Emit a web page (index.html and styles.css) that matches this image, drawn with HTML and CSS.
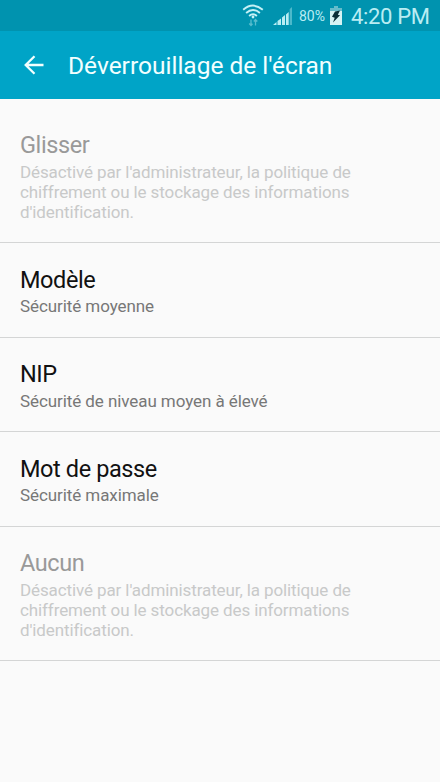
FILE: index.html
```html
<!DOCTYPE html>
<html lang="fr">
<head>
<meta charset="utf-8">
<title>Déverrouillage de l'écran</title>
<link rel="stylesheet" href="styles.css">
</head>
<body>
<div class="status">
  <svg class="wifi" width="22" height="24" viewBox="0 0 22 24" fill="none" stroke="#c5f1f6" stroke-width="1.9">
    <path d="M1.2 5.700Q11 -2.500 20.8 5.700M4.1 8.900Q11 3.200 17.900 8.900M7.100 11.900Q11 8.700 14.900 11.900"/>
    <circle cx="11" cy="13" r="1.400" fill="#c5f1f6" stroke="none"/>
    <path d="M9 21.500V15.500M7.200 19.500L9 21.500L10.500 19.800M13.500 21.500V15.500M11.800 17.500L13.500 15.500L15.300 17.500" stroke="#57bdce" stroke-width="1.300"/>
  </svg>
  <svg class="signal" width="20" height="20" viewBox="0 0 20 20" fill="#b9edf3">
    <path d="M0 19L3.500 16V19zM4.500 15L8 12.500V19H4.500zM9 11.500L12 9V19H9zM13 8.500L15.700 6V19H13z"/>
    <path d="M16.700 3L19 1V19h-2.300z" fill="#4cb9cb"/>
  </svg>
  <span class="percent">80%</span>
  <svg class="battery" width="12" height="19" viewBox="0 0 12 19">
    <path d="M4 0h4v2h4v17H0V2h4z" fill="#d6f3f4"/>
    <path d="M4 0h4v2h4v3H0V2h4z" fill="#65bccb"/>
    <path d="M5 5.500L10 4.500L7.800 8.700L10 9.200L3 16.500L4.700 11.700L2 10.800Z" fill="#092f38"/>
  </svg>
  <span class="time">4:20 PM</span>
</div>
<header class="bar">
  <svg class="back" width="20" height="20" viewBox="0 0 20 20" fill="none" stroke="#f2ffff" stroke-width="2.300">
    <path d="M19.500 10H2M10.500 1.200L1.700 10L10.500 18.800"/>
  </svg>
  <h1>Déverrouillage de l'écran</h1>
</header>
<main>
  <section class="item off">
    <h2>Glisser</h2>
    <p>Désactivé par l'administrateur, la politique de<br>chiffrement ou le stockage des informations<br>d'identification.</p>
  </section>
  <section class="item">
    <h2>Modèle</h2>
    <p>Sécurité moyenne</p>
  </section>
  <section class="item">
    <h2>NIP</h2>
    <p>Sécurité de niveau moyen à élevé</p>
  </section>
  <section class="item">
    <h2>Mot de passe</h2>
    <p>Sécurité maximale</p>
  </section>
  <section class="item off">
    <h2>Aucun</h2>
    <p>Désactivé par l'administrateur, la politique de<br>chiffrement ou le stockage des informations<br>d'identification.</p>
  </section>
</main>
</body>
</html>
```
FILE: styles.css
```css
* { box-sizing: border-box; margin: 0; }
body {
  height: 782px;
  overflow: hidden;
  background: #fafafa;
  font-family: Roboto, "Liberation Sans", sans-serif;
}
.status {
  display: flex;
  height: 31px;
  padding-left: 242px;
  background: #0093af;
  color: #b9edf3;
  white-space: nowrap;
}
.status svg { flex: none; }
.wifi { margin-top: 4px; }
.signal { margin: 6px 0 0 9px; }
.percent { width: 30px; margin-left: 6px; font-size: 14px; line-height: 33px; }
.battery { margin-top: 6px; margin-left: 1px; }
.time { margin-left: 9px; font-size: 22px; line-height: 33px; letter-spacing: -0.35px; }
.bar {
  display: flex;
  align-items: center;
  height: 68px;
  padding-left: 24px;
  background: #00a4c7;
  color: #f2ffff;
}
.back { flex: none; margin-right: 24px; }
h1 { padding-top: 2px; font-size: 24.5px; font-weight: 400; line-height: 28px; white-space: nowrap; }
main { padding-top: 9.5px; }
.item {
  height: 94.5px;
  padding: 22.6px 20px 0;
  border-bottom: 1px solid #d4d5d5;
  white-space: nowrap;
}
.item.off { height: 134.5px; }
h2 { color: #111; font-size: 23.5px; font-weight: 400; line-height: 29px; letter-spacing: -0.4px; }
p { margin-top: 1.5px; color: #777; font-size: 17px; font-weight: 400; line-height: 20px; letter-spacing: -0.08px; }
.off h2 { color: #999; }
.off p { color: #c8c9c9; letter-spacing: -0.11px; }
```
